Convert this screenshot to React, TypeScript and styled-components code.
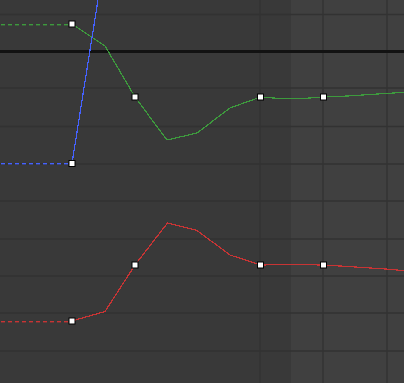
import React from 'react';
import styled, { createGlobalStyle } from 'styled-components';

const GlobalStyle = createGlobalStyle`
  html, body {
    margin: 0;
    padding: 0;
    background: #393939;
    overflow: hidden;
    font-family: "DejaVu Sans", sans-serif;
  }
`;

const Editor = styled.div`
  position: relative;
  width: 100vw;
  height: 100vh;
  overflow: hidden;
  display: flex;
`;

const Range = styled.div<{ $active?: boolean }>`
  height: 100%;
  background: ${({ $active }) => ($active ? '#404040' : '#393939')};
  ${({ $active }) => ($active ? 'flex: 1;' : 'width: 291px;')}
`;

const CurveLayer = styled.svg`
  position: absolute;
  inset: 0;
  width: 100%;
  height: 100%;
`;

type Pt = [number, number];

const gridRows = [14.5, 88, 126.5, 164, 201, 239, 276, 313, 351];
const gridCols = [260, 323, 387];

const curves: { color: string; extendY: number; path: Pt[]; keys: Pt[] }[] = [
  {
    color: '#3d9a3d',
    extendY: 24,
    path: [
      [72, 24], [105, 46], [135, 97], [167, 140], [197, 133], [230, 108],
      [260.5, 97], [277, 98.3], [306, 98.3], [323.5, 97], [348, 96],
      [378, 94], [404, 92.3],
    ],
    keys: [[72, 24], [135, 97], [260.5, 97], [323.5, 97]],
  },
  {
    color: '#4562ff',
    extendY: 163.5,
    path: [[72, 163.5], [98.3, -2]],
    keys: [[72, 163.5]],
  },
  {
    color: '#c83434',
    extendY: 321,
    path: [
      [72, 321], [105, 311.5], [135, 265], [167.5, 223], [197, 230.5],
      [230, 255], [260.5, 265], [291, 264.5], [323.5, 265], [340, 266],
      [363, 267.5], [393, 269.5], [404, 270.8],
    ],
    keys: [[72, 321], [135, 265], [260.5, 265], [323.5, 265]],
  },
];

const toPoints = (pts: Pt[]) => pts.map(([x, y]) => `${x},${y}`).join(' ');

// dashed extrapolation before the first keyframe
const dashes = (y: number, color: string) =>
  Array.from({ length: 10 }, (_, i) => (
    <rect key={i} x={1 + i * 7} y={Math.floor(y)} width={4} height={1.4} fill={color} />
  ));

export default function App() {
  return (
    <>
      <GlobalStyle />
      <Editor>
        <Range />
        <Range $active />
        <CurveLayer viewBox="0 0 404 383" preserveAspectRatio="xMinYMin slice">
          {gridRows.map((y) => (
            <rect key={`r${y}`} x={0} y={y - 0.75} width={404} height={1.5} fill="#323232" />
          ))}
          {gridCols.map((x) => (
            <rect key={`c${x}`} x={x - 0.75} y={0} width={1.5} height={383} fill="#333333" />
          ))}
          <rect x={0} y={50} width={404} height={3} fill="#121212" />

          {curves.map((c) => (
            <g key={c.color}>
              {dashes(c.extendY, c.color)}
              <polyline
                points={toPoints(c.path)}
                fill="none"
                stroke={c.color}
                strokeWidth={1.2}
                shapeRendering="crispEdges"
              />
            </g>
          ))}

          {curves.flatMap((c) =>
            c.keys.map(([x, y]) => (
              <rect
                key={`${c.color}${x}`}
                x={x - 3}
                y={y - 3}
                width={6}
                height={6}
                fill="#ffffff"
                stroke="#000000"
                strokeWidth={1}
              />
            ))
          )}
        </CurveLayer>
      </Editor>
    </>
  );
}
